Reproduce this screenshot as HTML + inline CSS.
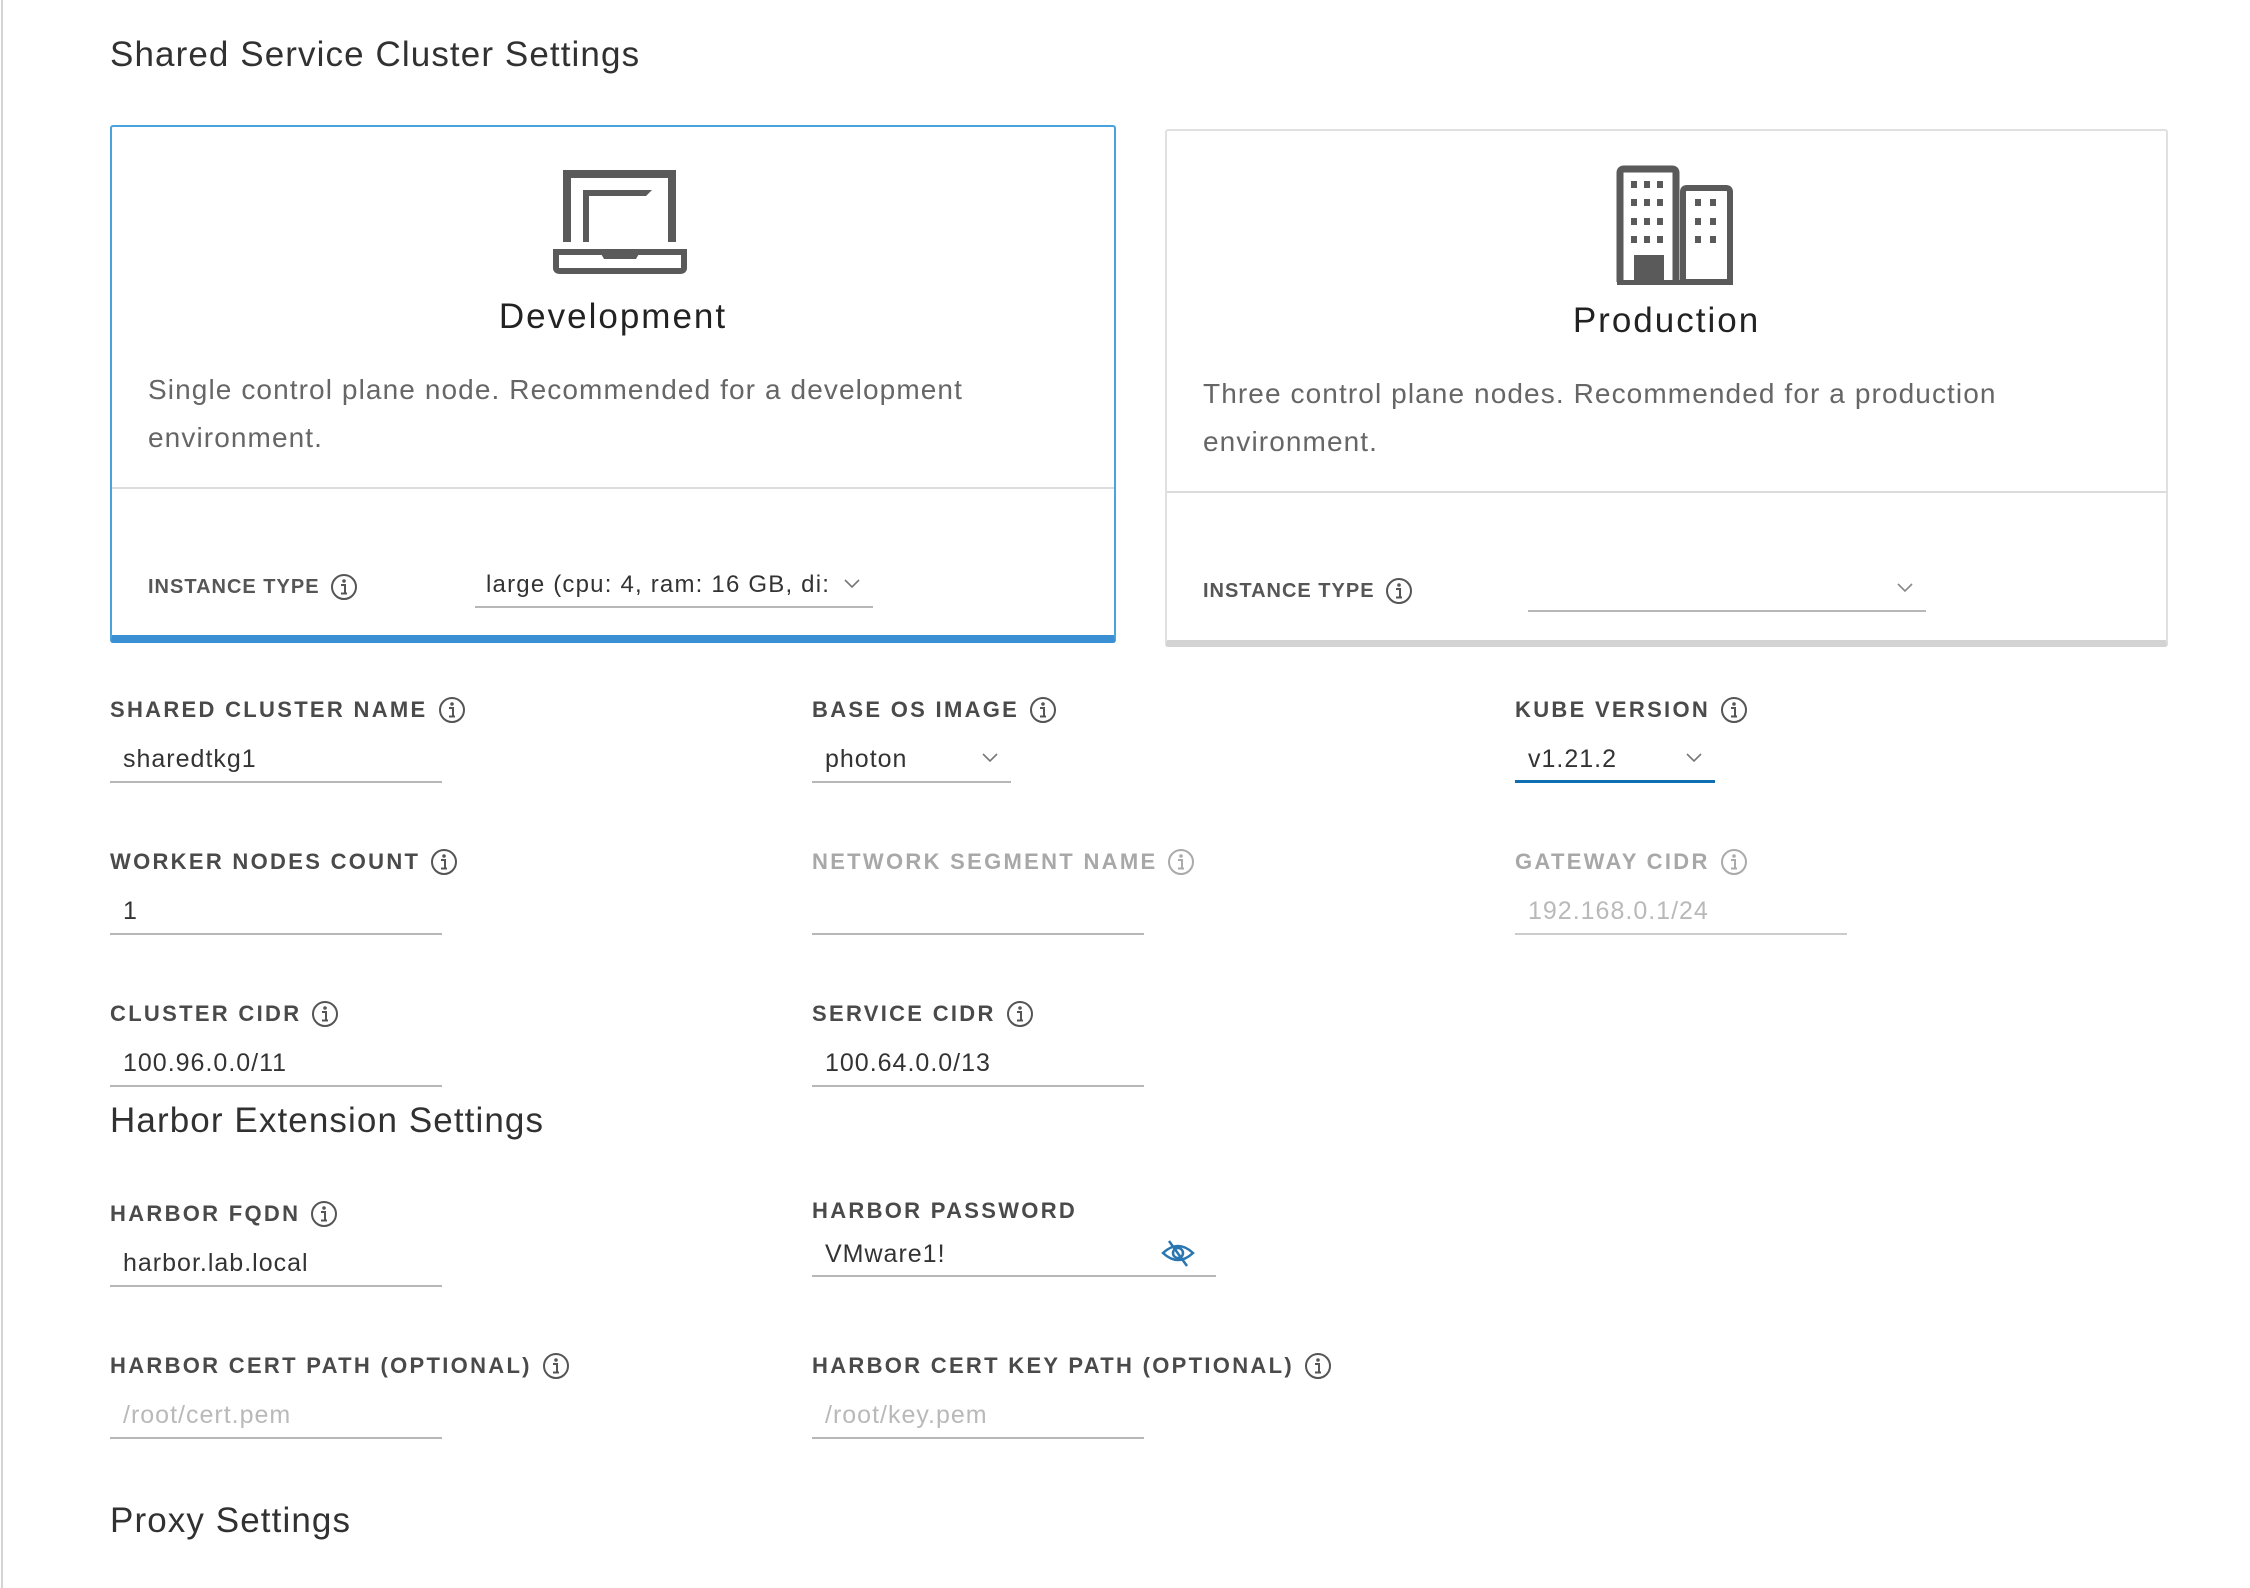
<!DOCTYPE html>
<html><head><meta charset="utf-8"><style>
*{margin:0;padding:0;box-sizing:border-box}
body{width:2250px;height:1588px;background:#fff;position:relative;overflow:hidden;font-family:"Liberation Sans",sans-serif;color:#333}
.a{position:absolute;white-space:nowrap}
.h{font-size:35px;color:#313131;line-height:40px;letter-spacing:1.1px}
.lbl{font-size:22px;font-weight:bold;letter-spacing:2.3px;color:#4a4a4a;line-height:30px;display:flex;align-items:center}
.lbl.dis{color:#a8a8a8}
.lbl svg{margin-left:10px}
.val{font-size:25px;letter-spacing:1px;color:#333;line-height:30px}
.ph{color:#b9b9b9}
.ul{position:absolute;height:2px;background:#b7b7b7}
.desc{font-size:28px;color:#666;line-height:48px;letter-spacing:1.1px}
.card-t{font-size:35px;color:#222;line-height:40px;letter-spacing:2px}
.il{font-size:20px;font-weight:bold;letter-spacing:1px;color:#565656;line-height:30px;display:flex;align-items:center}
.il svg{margin-left:10px}
</style></head><body>
<div style="position:absolute;left:1px;top:0;width:2px;height:1588px;background:#d4d4d4"></div>

<div class="a h" style="left:110px;top:35px">Shared Service Cluster Settings</div>

<!-- Dev card -->
<div style="position:absolute;left:110px;top:125px;width:1006px;height:518px;border:2px solid #49a3dc;border-bottom:8px solid #3b8fd3;border-radius:3px"></div>
<svg class="a" style="left:540px;top:160px" width="170" height="130" viewBox="540 160 170 130">
<path d="M567 242 V174 H672 V242" fill="none" stroke="#5a5a5a" stroke-width="8"/>
<path d="M583 242 V190 H652 L646 196 H589 V242 Z" fill="#5a5a5a"/>
<path d="M556 252 H684 V268 Q684 271 680 271 H560 Q556 271 556 268 Z" fill="none" stroke="#5a5a5a" stroke-width="6"/>
<path d="M600 252 H640 L636 259 H604 Z" fill="#5a5a5a"/>
</svg>
<div class="a card-t" style="left:110px;width:1006px;text-align:center;top:297px">Development</div>
<div class="a desc" style="left:148px;top:366px">Single control plane node. Recommended for a development<br>environment.</div>
<div style="position:absolute;left:112px;top:487px;width:1002px;height:2px;background:#dcdcdc"></div>
<div class="a il" style="left:148px;top:572px">INSTANCE TYPE<svg width="28" height="28" viewBox="0 0 28 28"><circle cx="14" cy="14" r="12" fill="none" stroke="#555" stroke-width="2"/><circle cx="14" cy="8" r="1.8" fill="#555"/><path d="M11 12 H15 V20 M11 20.5 H17" fill="none" stroke="#555" stroke-width="2"/></svg></div>
<div class="a val" style="left:486px;top:570px;font-size:24px;letter-spacing:1.2px">large (cpu: 4, ram: 16 GB, di:</div>
<svg class="a" style="left:843px;top:578px" width="18" height="12"><path d="M2 2 L9 9 L16 2" fill="none" stroke="#777" stroke-width="1.6"/></svg>
<div class="ul" style="left:475px;top:606px;width:398px"></div>

<!-- Prod card -->
<div style="position:absolute;left:1165px;top:129px;width:1003px;height:518px;border:2px solid #e0e0e0;border-bottom:7px solid #d3d3d3;border-radius:3px"></div>
<svg class="a" style="left:1610px;top:160px" width="130" height="130" viewBox="1610 160 130 130">
<path d="M1620 282 V173 Q1620 169 1624 169 H1672 Q1676 169 1676 173 V282" fill="none" stroke="#5a5a5a" stroke-width="7"/>
<path d="M1683 282 V192 Q1683 188 1687 188 H1726 Q1730 188 1730 192 V282 Z" fill="none" stroke="#5a5a5a" stroke-width="6"/>
<rect x="1617" y="280" width="116" height="5" fill="#5a5a5a"/>
<rect x="1634" y="255" width="30" height="28" fill="#5a5a5a"/>
<g fill="#5a5a5a">
<rect x="1631" y="181" width="6" height="7"/><rect x="1644" y="181" width="6" height="7"/><rect x="1657" y="181" width="6" height="7"/>
<rect x="1631" y="199" width="6" height="7"/><rect x="1644" y="199" width="6" height="7"/><rect x="1657" y="199" width="6" height="7"/>
<rect x="1631" y="218" width="6" height="7"/><rect x="1644" y="218" width="6" height="7"/><rect x="1657" y="218" width="6" height="7"/>
<rect x="1631" y="236" width="6" height="7"/><rect x="1644" y="236" width="6" height="7"/><rect x="1657" y="236" width="6" height="7"/>
<rect x="1695" y="199" width="6" height="7"/><rect x="1710" y="199" width="6" height="7"/>
<rect x="1695" y="218" width="6" height="7"/><rect x="1710" y="218" width="6" height="7"/>
<rect x="1695" y="236" width="6" height="7"/><rect x="1710" y="236" width="6" height="7"/>
</g>
</svg>
<div class="a card-t" style="left:1165px;width:1003px;text-align:center;top:301px">Production</div>
<div class="a desc" style="left:1203px;top:370px">Three control plane nodes. Recommended for a production<br>environment.</div>
<div style="position:absolute;left:1167px;top:491px;width:999px;height:2px;background:#dcdcdc"></div>
<div class="a il" style="left:1203px;top:576px">INSTANCE TYPE<svg width="28" height="28" viewBox="0 0 28 28"><circle cx="14" cy="14" r="12" fill="none" stroke="#555" stroke-width="2"/><circle cx="14" cy="8" r="1.8" fill="#555"/><path d="M11 12 H15 V20 M11 20.5 H17" fill="none" stroke="#555" stroke-width="2"/></svg></div>
<svg class="a" style="left:1896px;top:582px" width="18" height="12"><path d="M2 2 L9 9 L16 2" fill="none" stroke="#888" stroke-width="1.6"/></svg>
<div class="ul" style="left:1528px;top:610px;width:398px"></div>

<!-- Row 1 -->
<div class="a lbl" style="left:110px;top:695px">SHARED CLUSTER NAME<svg width="28" height="28" viewBox="0 0 28 28"><circle cx="14" cy="14" r="12" fill="none" stroke="#555" stroke-width="2"/><circle cx="14" cy="8" r="1.8" fill="#555"/><path d="M11 12 H15 V20 M11 20.5 H17" fill="none" stroke="#555" stroke-width="2"/></svg></div>
<div class="a val" style="left:123px;top:744px">sharedtkg1</div>
<div class="ul" style="left:110px;top:781px;width:332px"></div>

<div class="a lbl" style="left:812px;top:695px">BASE OS IMAGE<svg width="28" height="28" viewBox="0 0 28 28"><circle cx="14" cy="14" r="12" fill="none" stroke="#555" stroke-width="2"/><circle cx="14" cy="8" r="1.8" fill="#555"/><path d="M11 12 H15 V20 M11 20.5 H17" fill="none" stroke="#555" stroke-width="2"/></svg></div>
<div class="a val" style="left:825px;top:744px">photon</div>
<svg class="a" style="left:981px;top:752px" width="18" height="12"><path d="M2 2 L9 9 L16 2" fill="none" stroke="#777" stroke-width="1.6"/></svg>
<div class="ul" style="left:812px;top:781px;width:199px"></div>

<div class="a lbl" style="left:1515px;top:695px">KUBE VERSION<svg width="28" height="28" viewBox="0 0 28 28"><circle cx="14" cy="14" r="12" fill="none" stroke="#555" stroke-width="2"/><circle cx="14" cy="8" r="1.8" fill="#555"/><path d="M11 12 H15 V20 M11 20.5 H17" fill="none" stroke="#555" stroke-width="2"/></svg></div>
<div class="a val" style="left:1528px;top:744px">v1.21.2</div>
<svg class="a" style="left:1685px;top:752px" width="18" height="12"><path d="M2 2 L9 9 L16 2" fill="none" stroke="#777" stroke-width="1.6"/></svg>
<div class="ul" style="left:1515px;top:780px;width:200px;height:3px;background:#0f6fb0"></div>

<!-- Row 2 -->
<div class="a lbl" style="left:110px;top:847px">WORKER NODES COUNT<svg width="28" height="28" viewBox="0 0 28 28"><circle cx="14" cy="14" r="12" fill="none" stroke="#555" stroke-width="2"/><circle cx="14" cy="8" r="1.8" fill="#555"/><path d="M11 12 H15 V20 M11 20.5 H17" fill="none" stroke="#555" stroke-width="2"/></svg></div>
<div class="a val" style="left:123px;top:896px">1</div>
<div class="ul" style="left:110px;top:933px;width:332px"></div>

<div class="a lbl dis" style="left:812px;top:847px">NETWORK SEGMENT NAME<svg width="28" height="28" viewBox="0 0 28 28"><circle cx="14" cy="14" r="12" fill="none" stroke="#aaa" stroke-width="2"/><circle cx="14" cy="8" r="1.8" fill="#aaa"/><path d="M11 12 H15 V20 M11 20.5 H17" fill="none" stroke="#aaa" stroke-width="2"/></svg></div>
<div class="ul" style="left:812px;top:933px;width:332px"></div>

<div class="a lbl dis" style="left:1515px;top:847px">GATEWAY CIDR<svg width="28" height="28" viewBox="0 0 28 28"><circle cx="14" cy="14" r="12" fill="none" stroke="#aaa" stroke-width="2"/><circle cx="14" cy="8" r="1.8" fill="#aaa"/><path d="M11 12 H15 V20 M11 20.5 H17" fill="none" stroke="#aaa" stroke-width="2"/></svg></div>
<div class="a val ph" style="left:1528px;top:896px">192.168.0.1/24</div>
<div class="ul" style="left:1515px;top:933px;width:332px;background:#ccc"></div>

<!-- Row 3 -->
<div class="a lbl" style="left:110px;top:999px">CLUSTER CIDR<svg width="28" height="28" viewBox="0 0 28 28"><circle cx="14" cy="14" r="12" fill="none" stroke="#555" stroke-width="2"/><circle cx="14" cy="8" r="1.8" fill="#555"/><path d="M11 12 H15 V20 M11 20.5 H17" fill="none" stroke="#555" stroke-width="2"/></svg></div>
<div class="a val" style="left:123px;top:1048px">100.96.0.0/11</div>
<div class="ul" style="left:110px;top:1085px;width:332px"></div>

<div class="a lbl" style="left:812px;top:999px">SERVICE CIDR<svg width="28" height="28" viewBox="0 0 28 28"><circle cx="14" cy="14" r="12" fill="none" stroke="#555" stroke-width="2"/><circle cx="14" cy="8" r="1.8" fill="#555"/><path d="M11 12 H15 V20 M11 20.5 H17" fill="none" stroke="#555" stroke-width="2"/></svg></div>
<div class="a val" style="left:825px;top:1048px">100.64.0.0/13</div>
<div class="ul" style="left:812px;top:1085px;width:332px"></div>

<div class="a h" style="left:110px;top:1101px">Harbor Extension Settings</div>

<div class="a lbl" style="left:110px;top:1199px">HARBOR FQDN<svg width="28" height="28" viewBox="0 0 28 28"><circle cx="14" cy="14" r="12" fill="none" stroke="#555" stroke-width="2"/><circle cx="14" cy="8" r="1.8" fill="#555"/><path d="M11 12 H15 V20 M11 20.5 H17" fill="none" stroke="#555" stroke-width="2"/></svg></div>
<div class="a val" style="left:123px;top:1248px">harbor.lab.local</div>
<div class="ul" style="left:110px;top:1285px;width:332px"></div>

<div class="a lbl" style="left:812px;top:1196px">HARBOR PASSWORD</div>
<div class="a val" style="left:825px;top:1239px">VMware1!</div>
<svg class="a" style="left:1160px;top:1238px" width="36" height="30" viewBox="0 0 36 30"><path d="M3 15 Q18 1 33 15 Q18 29 3 15 Z" fill="none" stroke="#2a76b0" stroke-width="2.5"/><circle cx="18" cy="15" r="5" fill="none" stroke="#2a76b0" stroke-width="2.5"/><path d="M9 3 L27 28" stroke="#2a76b0" stroke-width="2.5"/></svg>
<div class="ul" style="left:812px;top:1275px;width:404px"></div>

<div class="a lbl" style="left:110px;top:1351px">HARBOR CERT PATH (OPTIONAL)<svg width="28" height="28" viewBox="0 0 28 28"><circle cx="14" cy="14" r="12" fill="none" stroke="#555" stroke-width="2"/><circle cx="14" cy="8" r="1.8" fill="#555"/><path d="M11 12 H15 V20 M11 20.5 H17" fill="none" stroke="#555" stroke-width="2"/></svg></div>
<div class="a val ph" style="left:123px;top:1400px">/root/cert.pem</div>
<div class="ul" style="left:110px;top:1437px;width:332px"></div>

<div class="a lbl" style="left:812px;top:1351px">HARBOR CERT KEY PATH (OPTIONAL)<svg width="28" height="28" viewBox="0 0 28 28"><circle cx="14" cy="14" r="12" fill="none" stroke="#555" stroke-width="2"/><circle cx="14" cy="8" r="1.8" fill="#555"/><path d="M11 12 H15 V20 M11 20.5 H17" fill="none" stroke="#555" stroke-width="2"/></svg></div>
<div class="a val ph" style="left:825px;top:1400px">/root/key.pem</div>
<div class="ul" style="left:812px;top:1437px;width:332px"></div>

<div class="a h" style="left:110px;top:1501px">Proxy Settings</div>
</body></html>
